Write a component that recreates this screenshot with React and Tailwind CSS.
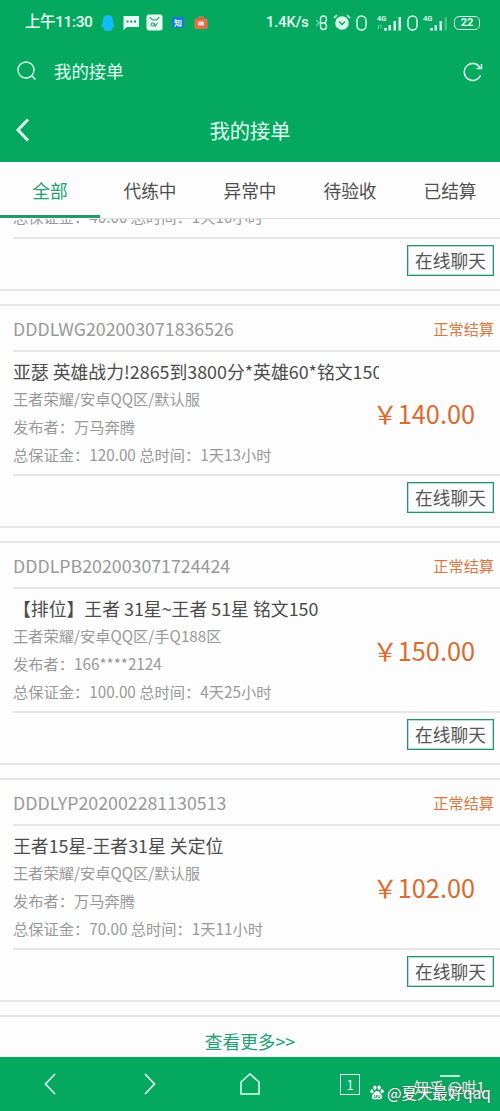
import React from "react";

const tabs = ["全部", "代练中", "异常中", "待验收", "已结算"];

const orders = [
  {
    id: "DDDLWG202003071836526",
    status: "正常结算",
    title: "亚瑟 英雄战力!2865到3800分*英雄60*铭文150",
    area: "王者荣耀/安卓QQ区/默认服",
    publisher: "万马奔腾",
    deposit: "120.00",
    time: "1天13小时",
    price: "140.00",
  },
  {
    id: "DDDLPB202003071724424",
    status: "正常结算",
    title: "【排位】王者 31星~王者 51星 铭文150",
    area: "王者荣耀/安卓QQ区/手Q188区",
    publisher: "166****2124",
    deposit: "100.00",
    time: "4天25小时",
    price: "150.00",
  },
  {
    id: "DDDLYP202002281130513",
    status: "正常结算",
    title: "王者15星-王者31星 关定位",
    area: "王者荣耀/安卓QQ区/默认服",
    publisher: "万马奔腾",
    deposit: "70.00",
    time: "1天11小时",
    price: "102.00",
  },
];

const Vibrate = () => (
  <svg width="11" height="16" viewBox="0 0 11 16" fill="none" stroke="#d5fbe8" strokeWidth="1.500">
    <rect x="1" y="1" width="9" height="14" rx="4.500" />
  </svg>
);

const Signal = ({ weak }) => (
  <svg width="26" height="18" viewBox="0 0 26 18" fill="#d5fbe8">
    <text x="1" y="7" fontSize="7.500" fontWeight="700" fontFamily="Roboto, sans-serif">
      4G
    </text>
    {!weak && <path d="M2 11h1v4h-1zM4.500 10.500h1v4h-1z" opacity="0.500" />}
    <rect x="8" y="14" width="3" height="2.500" />
    <rect x="12.500" y="11" width="2.500" height="5.500" />
    <rect x="17.500" y="7" width="2.500" height="9.500" />
    <rect x="22.500" y="3" width="2.500" height="13.500" opacity={weak ? 0.3 : 1} />
  </svg>
);

const StatusBar = () => (
  <div className="flex h-[45px] items-center text-[#e4fff2]">
    <div className="flex w-[266px] items-center pl-[25px]">
      <span className="w-[75px] font-['Roboto','Noto_Sans_CJK_SC',sans-serif] text-[15.500px] font-medium tracking-[-0.400px] whitespace-nowrap">
        上午11:30
      </span>
      <svg className="ml-[1px]" width="14" height="18" viewBox="0 0 14 18">
        <path d="M7 1C3.500 1 2 3.500 2 7c0 2-1.700 4-1.500 6 .2 1.200 1 .5 1.700-.3C2.500 14 3 15 3 16c0 1.300 8 1.300 8 0 0-1 .6-2 .8-3.300.7.8 1.500 1.500 1.700.3C13.700 11 12 9 12 7c0-3.500-1.500-6-5-6z" fill="#12bdf5" />
      </svg>
      <svg className="ml-[8px]" width="17" height="16" viewBox="0 0 17 16">
        <path d="M0.500 1h15.500v11H4l-3.500 3z" fill="#e6fff3" />
        <path d="M3.500 5.500h2v2h-2zM7.300 5.500h2v2h-2zM11 5.500h2v2h-2z" fill="#2a8a62" />
      </svg>
      <svg className="ml-[6px]" width="17" height="17" viewBox="0 0 17 17">
        <rect x="0.500" y="0.500" width="16" height="16" rx="2.500" fill="#e6fff3" />
        <path d="M4 3c1 2.500 2.500 3 4.500 3S12 5.500 13 3" fill="none" stroke="#4b9b7c" strokeWidth="1.200" />
        <path d="M8 9H6.500a1.500 1.500 0 0 0 0 3H8V9l1.500 3L11.500 9" fill="none" stroke="#4b9b7c" strokeWidth="1.200" />
      </svg>
      <span className="ml-[9px] flex h-[11px] w-[12px] items-center justify-center rounded-[2px] bg-[#1877dc] text-[8px] leading-none font-bold">
        知
      </span>
      <svg className="ml-[10px]" width="14" height="14" viewBox="0 0 14 14">
        <path d="M5 2.500V1h4v1.500" fill="none" stroke="#e2704a" strokeWidth="1.300" />
        <rect x="0.500" y="2.500" width="13" height="10.500" rx="1.500" fill="#e2704a" />
        <rect x="4" y="5.500" width="6" height="4" rx="1" fill="#ffd3cf" />
      </svg>
    </div>
    <span className="w-[50px] whitespace-nowrap font-['Roboto'] text-[14.500px] font-medium">
      1.4K/s
    </span>
    <svg width="12" height="16" viewBox="0 0 12 16" fill="none" stroke="#d5fbe8" strokeWidth="1.400">
      <path d="M0 5l3 3-3 3" opacity="0.500" />
      <path d="M4 8h4.500M4.500 9V4a3 3 0 0 1 6 0c0 2-.5 3-2 4 1.500.5 2 2 2 3.500a3 3 0 0 1-6 0V8" />
    </svg>
    <svg className="ml-[5px]" width="18" height="17" viewBox="0 0 18 17">
      <circle cx="9" cy="9" r="6.800" fill="#d5fbe8" />
      <path d="M1 4l3-3M17 4l-3-3" stroke="#d5fbe8" strokeWidth="1.600" />
      <path d="M6 7.500l3 3 3-3" fill="none" stroke="#159f64" strokeWidth="1.400" />
    </svg>
    <span className="ml-[5px]">
      <Vibrate />
    </span>
    <span className="ml-[9px]">
      <Signal />
    </span>
    <span className="ml-[5px]">
      <Vibrate />
    </span>
    <span className="ml-[4px]">
      <Signal weak />
    </span>
    <span className="ml-[6px] flex h-[14px] w-[26px] items-center justify-center rounded-[5px] border-[1.500px] border-[#d5fbe8] font-['Roboto'] text-[11px] leading-none font-bold">
      22
    </span>
  </div>
);

const ChatButton = () => (
  <button className="h-[31px] w-[87px] border border-[#1f936e] text-[17.700px] leading-[29px] whitespace-nowrap text-[#555] outline-1 -outline-offset-2 outline-[#1f936e]/30">
    在线聊天
  </button>
);

const OrderCard = ({ order }) => (
  <div className="mb-[13px] h-[224px] border-y-2 border-[#e6e6e6] pl-[13px]">
    <div className="flex h-[46px] items-center justify-between border-b-2 border-[#e6e6e6] pr-[6px]">
      <span className="text-[17.770px] text-[#999]">{order.id}</span>
      <span className="text-[15.200px] text-[#d9773f]">{order.status}</span>
    </div>
    <div className="flex h-[124px] items-center justify-between border-b-2 border-[#e6e6e6] pr-[25px]">
      <div className="w-[340px] min-w-0 text-[15.260px] leading-[27.700px] whitespace-nowrap text-[#999]">
        <p className="w-[366px] overflow-hidden text-[17.850px] text-[#4c4c4c]">{order.title}</p>
        <p>{order.area}</p>
        <p>发布者：{order.publisher}</p>
        <p>
          总保证金：{order.deposit} 总时间：{order.time}
        </p>
      </div>
      <span className="shrink-0 pt-[2px] text-[25.300px] whitespace-nowrap text-[#dc6b2f]">￥{order.price}</span>
    </div>
    <div className="flex justify-end pt-[6px] pr-[6px]">
      <ChatButton />
    </div>
  </div>
);

const BottomNav = () => (
  <div className="relative h-[54px] bg-[#04a95f]">
    <div className="grid h-full grid-cols-5 place-items-center text-[#dcfff0]">
      <svg width="12" height="22" viewBox="0 0 12 22" fill="none" stroke="currentColor" strokeWidth="1.700">
        <path d="M11 1L1.500 11 11 21" />
      </svg>
      <svg width="12" height="22" viewBox="0 0 12 22" fill="none" stroke="currentColor" strokeWidth="1.700">
        <path d="M1 1l9.500 10L1 21" />
      </svg>
      <svg width="20" height="22" viewBox="0 0 20 22" fill="none" stroke="currentColor" strokeWidth="1.600">
        <path d="M1 9l9-8 9 8v12H1z" />
      </svg>
      <span className="flex h-[21px] w-[20px] items-center justify-center border-[1.500px] border-current text-[13px] leading-none">
        1
      </span>
      <svg width="20" height="20" viewBox="0 0 20 20" stroke="currentColor" strokeWidth="1.700">
        <path d="M0 2h20" />
      </svg>
    </div>
    {/* watermarks */}
    <span className="absolute top-[19px] left-[414px] text-[15px] leading-[22px] whitespace-nowrap text-[#e8f3ee] [text-shadow:0_0_1px_#666]">
      知乎 @咁1
    </span>
    <div className="absolute top-[24px] left-[370px] flex items-center gap-[3px] whitespace-nowrap text-white">
      <svg width="14" height="15" viewBox="0 0 14 15" fill="currentColor">
        <ellipse cx="1.900" cy="6.300" rx="1.600" ry="2" />
        <ellipse cx="4.900" cy="2.600" rx="1.600" ry="2.200" />
        <ellipse cx="9.100" cy="2.600" rx="1.600" ry="2.200" />
        <ellipse cx="12.100" cy="6.300" rx="1.600" ry="2" />
        <path d="M7 6c-2 0-3 2-4.200 3.200C.8 11.500 2 14.500 4.500 14.300c1.800-.2 3.200-.2 5 0 2.500.2 3.700-2.800 1.700-5.100C10 8 9 6 7 6z" />
        <path d="M4.500 10v2.500h2V10M8 10v2.500h2V10" fill="none" stroke="#16945b" strokeWidth="0.800" />
      </svg>
      <span className="text-[15.400px] leading-[22px] [text-shadow:0_0_2px_#555]">@夏天最好qaq</span>
    </div>
  </div>
);

const App = () => {
  return (
    <div className="flex h-[1111px] w-[500px] flex-col overflow-hidden bg-[#fdfdfd] font-['Noto_Sans_CJK_SC',sans-serif]">
      <header className="h-[162px] shrink-0 bg-[#04a95f] text-[#e0fff1]">
        <StatusBar />
        <div className="flex h-[53px] items-center justify-between pr-[17px] pl-[17px]">
          <div className="flex items-center gap-[17px]">
            <svg width="20" height="20" viewBox="0 0 20 20" fill="none" stroke="currentColor" strokeWidth="1.400">
              <circle cx="9" cy="9" r="8" />
              <path d="M14.500 14.500l4 4" />
            </svg>
            <span className="text-[17.400px]">我的接单</span>
          </div>
          <svg width="20" height="20" viewBox="0 0 20 20" fill="none" stroke="currentColor" strokeWidth="1.500">
            <path d="M17.500 13.500A8.500 8.500 0 1 1 17 5.500" />
            <path d="M18.500 2v4.500h-5" />
          </svg>
        </div>
        <div className="grid h-[64px] grid-cols-[80px_1fr_80px] items-center">
          <svg className="ml-[15px]" width="15" height="24" viewBox="0 0 15 24" fill="none" stroke="currentColor" strokeWidth="3">
            <path d="M13 1.500L3 12l10 10.500" />
          </svg>
          <h1 className="text-center text-[20.300px]">我的接单</h1>
        </div>
      </header>

      <nav className="grid h-[57px] shrink-0 grid-cols-5 text-center text-[17.700px] leading-[57px] text-[#4f4f4f]">
        {tabs.map((tab, i) => (
          <span
            key={tab}
            className={
              i === 0
                ? "h-[56px] border-b-[3px] border-[#229b68] text-[#1fa077]"
                : "h-[57px] border-b border-[#dcdcdc]"
            }
          >
            {tab}
          </span>
        ))}
      </nav>

      <main className="h-[838px] shrink-0 overflow-hidden">
        {/* order scrolled under the tabs */}
        <div className="mb-[13px] h-[72px] border-b-2 border-[#e6e6e6] pl-[13px]">
          <div className="flex h-[20px] flex-col justify-end overflow-hidden border-b-2 border-[#e6e6e6] pb-[6px] text-[15.260px] text-[#999]">
            <p className="leading-[27.700px]">总保证金：40.00 总时间：1天10小时</p>
          </div>
          <div className="flex justify-end pt-[6px] pr-[6px]">
            <ChatButton />
          </div>
        </div>
        {orders.map((order) => (
          <OrderCard key={order.id} order={order} />
        ))}
        <div className="border-t-2 border-[#e6e6e6] pt-[10px] text-center text-[17.700px] leading-[28px] text-[#1fa077]">
          查看更多&gt;&gt;
        </div>
      </main>

      <BottomNav />
    </div>
  );
};

export default App;
